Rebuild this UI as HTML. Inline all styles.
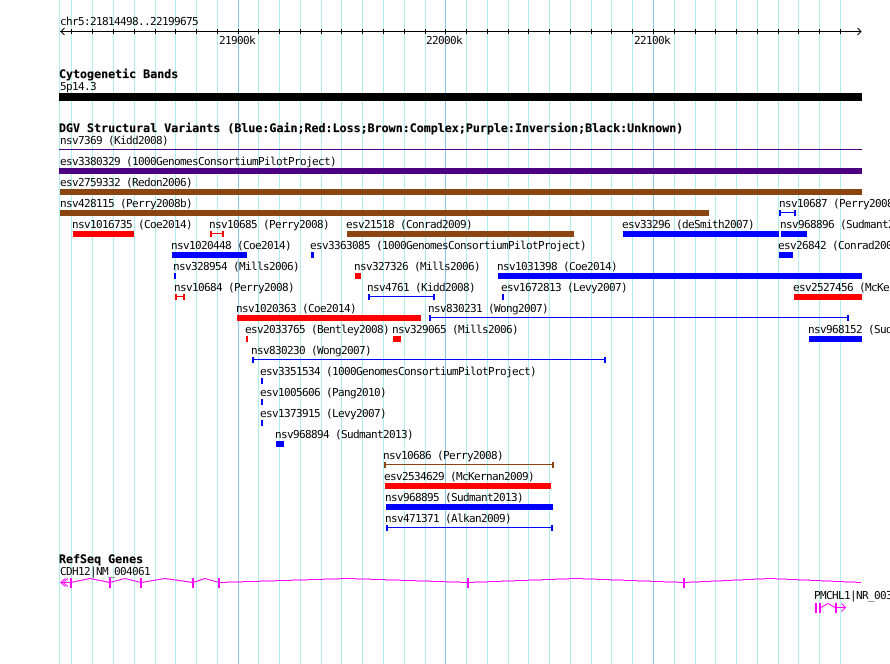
<!DOCTYPE html>
<html><head><meta charset="utf-8"><title>GBrowse</title>
<style>
html,body{margin:0;padding:0;background:#fff;width:890px;height:664px;overflow:hidden}
svg{display:block}
text{font-family:"DejaVu Sans Mono","Liberation Mono",monospace;font-size:11px;fill:#000;white-space:pre;letter-spacing:-.622px;text-rendering:geometricPrecision}
text.b{font-size:11.62px;font-weight:bold;letter-spacing:.025px;stroke:#000;stroke-width:.2px}
</style></head><body>
<svg width="890" height="664" viewBox="0 0 890 664" xmlns="http://www.w3.org/2000/svg" shape-rendering="crispEdges">
<rect width="890" height="664" fill="#fefffe"/>
<path stroke="#aeeeee" fill="none" d="M59.5 0V664M71.5 0V664M92.5 0V664M113.5 0V664M134.5 0V664M155.5 0V664M175.5 0V664M196.5 0V664M217.5 0V664M258.5 0V664M279.5 0V664M300.5 0V664M321.5 0V664M341.5 0V664M362.5 0V664M383.5 0V664M404.5 0V664M425.5 0V664M466.5 0V664M487.5 0V664M508.5 0V664M528.5 0V664M549.5 0V664M570.5 0V664M591.5 0V664M611.5 0V664M632.5 0V664M674.5 0V664M695.5 0V664M715.5 0V664M736.5 0V664M757.5 0V664M778.5 0V664M798.5 0V664M819.5 0V664M840.5 0V664"/>
<path stroke="#87c8ea" fill="none" d="M238.5 0V664M445.5 0V664M653.5 0V664"/>

<!-- ruler -->
<path stroke="#000" fill="none" d="M60 31.5H861M71.5 29V34M92.5 29V34M113.5 29V34M134.5 29V34M155.5 29V34M175.5 29V34M196.5 29V34M217.5 29V34M238.5 29V34M258.5 29V34M279.5 29V34M300.5 29V34M321.5 29V34M341.5 29V34M362.5 29V34M383.5 29V34M404.5 29V34M425.5 29V34M445.5 29V34M466.5 29V34M487.5 29V34M508.5 29V34M528.5 29V34M549.5 29V34M570.5 29V34M591.5 29V34M611.5 29V34M632.5 29V34M653.5 29V34M674.5 29V34M695.5 29V34M715.5 29V34M736.5 29V34M757.5 29V34M778.5 29V34M798.5 29V34M819.5 29V34M840.5 29V34"/>
<path stroke="#000" fill="none" shape-rendering="auto" d="M64.5 28L61 31.5L64.5 35M857.5 28L861 31.5L857.5 35"/>
<text x="60" y="25">chr5:21814498..22199675</text>
<text x="219" y="44">21900k</text>
<text x="426" y="44">22000k</text>
<text x="634" y="44">22100k</text>

<!-- cytoband -->
<text class="b" x="59" y="78">Cytogenetic Bands</text>
<text x="60" y="90">5p14.3</text>
<rect x="59" y="93" width="803" height="8" fill="#000"/>

<!-- DGV -->
<text class="b" x="59" y="132">DGV Structural Variants (Blue:Gain;Red:Loss;Brown:Complex;Purple:Inversion;Black:Unknown)</text>
<text x="60" y="144">nsv7369 (Kidd2008)</text>
<rect x="59" y="149" width="803" height="1" fill="#4b0082"/>
<text x="60" y="165">esv3380329 (1000GenomesConsortiumPilotProject)</text>
<rect x="59" y="168" width="803" height="6" fill="#4b0082"/>
<text x="60" y="186">esv2759332 (Redon2006)</text>
<rect x="60" y="189" width="802" height="6" fill="#8b4513"/>
<text x="60" y="207">nsv428115 (Perry2008b)</text>
<rect x="60" y="210" width="649" height="6" fill="#8b4513"/>
<text x="779" y="207">nsv10687 (Perry2008)</text>
<g fill="#00f"><rect x="779" y="210" width="2" height="6"/><rect x="794" y="210" width="2" height="6"/><rect x="779" y="212" width="17" height="1"/></g>

<text x="72" y="228">nsv1016735 (Coe2014)</text>
<rect x="73" y="231" width="61" height="6" fill="#f00"/>
<text x="209" y="228">nsv10685 (Perry2008)</text>
<g fill="#f00"><rect x="210" y="231" width="2" height="6"/><rect x="222" y="231" width="2" height="6"/><rect x="210" y="233" width="14" height="1"/></g>
<text x="346" y="228">esv21518 (Conrad2009)</text>
<rect x="347" y="231" width="227" height="6" fill="#8b4513"/>
<text x="622" y="228">esv33296 (deSmith2007)</text>
<rect x="623" y="231" width="156" height="6" fill="#00f"/>
<text x="780" y="228">nsv968896 (Sudmant2013)</text>
<rect x="781" y="231" width="26" height="6" fill="#00f"/>

<text x="171" y="249">nsv1020448 (Coe2014)</text>
<rect x="172" y="252" width="75" height="6" fill="#00f"/>
<text x="310" y="249">esv3363085 (1000GenomesConsortiumPilotProject)</text>
<rect x="311" y="252" width="3" height="6" fill="#00f"/>
<text x="778" y="249">esv26842 (Conrad2009)</text>
<rect x="779" y="252" width="14" height="6" fill="#00f"/>

<text x="173" y="270">nsv328954 (Mills2006)</text>
<rect x="174" y="273" width="2" height="6" fill="#00f"/>
<text x="354" y="270">nsv327326 (Mills2006)</text>
<rect x="355" y="273" width="6" height="6" fill="#f00"/>
<text x="497" y="270">nsv1031398 (Coe2014)</text>
<rect x="498" y="273" width="364" height="6" fill="#00f"/>

<text x="174" y="291">nsv10684 (Perry2008)</text>
<g fill="#f00"><rect x="175" y="294" width="2" height="6"/><rect x="183" y="294" width="2" height="6"/><rect x="175" y="296" width="10" height="1"/></g>
<text x="367" y="291">nsv4761 (Kidd2008)</text>
<g fill="#00f"><rect x="368" y="294" width="2" height="6"/><rect x="433" y="294" width="2" height="6"/><rect x="368" y="296" width="67" height="1"/></g>
<text x="501" y="291">esv1672813 (Levy2007)</text>
<rect x="502" y="294" width="2" height="6" fill="#00f"/>
<text x="793" y="291">esv2527456 (McKernan2009)</text>
<rect x="794" y="294" width="68" height="6" fill="#f00"/>

<text x="236" y="312">nsv1020363 (Coe2014)</text>
<rect x="237" y="315" width="184" height="6" fill="#f00"/>
<text x="428" y="312">nsv830231 (Wong2007)</text>
<g fill="#00f"><rect x="429" y="315" width="2" height="6"/><rect x="847" y="315" width="2" height="6"/><rect x="429" y="317" width="420" height="1"/></g>

<text x="245" y="333">esv2033765 (Bentley2008)</text>
<rect x="246" y="336" width="2" height="6" fill="#f00"/>
<text x="392" y="333">nsv329065 (Mills2006)</text>
<rect x="393" y="336" width="8" height="6" fill="#f00"/>
<text x="808" y="333">nsv968152 (Sudmant2013)</text>
<rect x="809" y="336" width="53" height="6" fill="#00f"/>

<text x="251" y="354">nsv830230 (Wong2007)</text>
<g fill="#00f"><rect x="252" y="357" width="2" height="6"/><rect x="604" y="357" width="2" height="6"/><rect x="252" y="359" width="354" height="1"/></g>

<text x="260" y="375">esv3351534 (1000GenomesConsortiumPilotProject)</text>
<rect x="261" y="378" width="2" height="6" fill="#00f"/>
<text x="260" y="396">esv1005606 (Pang2010)</text>
<rect x="261" y="399" width="2" height="6" fill="#00f"/>
<text x="260" y="417">esv1373915 (Levy2007)</text>
<rect x="261" y="420" width="2" height="6" fill="#00f"/>
<text x="275" y="438">nsv968894 (Sudmant2013)</text>
<rect x="276" y="441" width="8" height="6" fill="#00f"/>

<text x="383" y="459">nsv10686 (Perry2008)</text>
<g fill="#8b4513"><rect x="384" y="462" width="2" height="6"/><rect x="552" y="462" width="2" height="6"/><rect x="384" y="464" width="170" height="1"/></g>
<text x="384" y="480">esv2534629 (McKernan2009)</text>
<rect x="385" y="483" width="166" height="6" fill="#f00"/>
<text x="385" y="501">nsv968895 (Sudmant2013)</text>
<rect x="386" y="504" width="167" height="6" fill="#00f"/>
<text x="385" y="522">nsv471371 (Alkan2009)</text>
<g fill="#00f"><rect x="386" y="525" width="2" height="6"/><rect x="551" y="525" width="2" height="6"/><rect x="386" y="527" width="167" height="1"/></g>

<!-- genes -->
<text class="b" x="59" y="563">RefSeq Genes</text>
<text x="60" y="575">CDH12|NM_004061</text>
<g stroke="#f0f" fill="none">
<path shape-rendering="auto" d="M60.5 582.5L65.5 578.5M60.5 582.5L65.5 586.5M63 582.5L68 578.5M63 582.5L68 586.5M60.5 582.5H70"/>
<path d="M71 582.5L90 578.5L110 582.5L125 578.5L141 582.5L165 578.5L193 582.5L205 578.5L219 582.5L348 578.5L468 582.5L576 578.5L684 582.5L770 578.5L861 582.5"/>
<path d="M821 607.5L828 603.5L835 607.5M837 607.5H845"/>
<path shape-rendering="auto" d="M841.5 603.5L845.5 607.5L841.5 611.5"/>
</g>
<g fill="#f0f">
<rect x="70" y="578" width="2" height="10"/><rect x="109" y="578" width="2" height="10"/><rect x="140" y="578" width="2" height="10"/><rect x="192" y="578" width="2" height="10"/><rect x="218" y="578" width="2" height="10"/><rect x="467" y="578" width="2" height="10"/><rect x="683" y="578" width="2" height="10"/>
<rect x="815" y="603" width="2" height="10"/><rect x="819" y="603" width="2" height="10"/><rect x="835" y="603" width="2" height="10"/>
</g>
<text x="814" y="599">PMCHL1|NR_003942</text>
</svg>
</body></html>
